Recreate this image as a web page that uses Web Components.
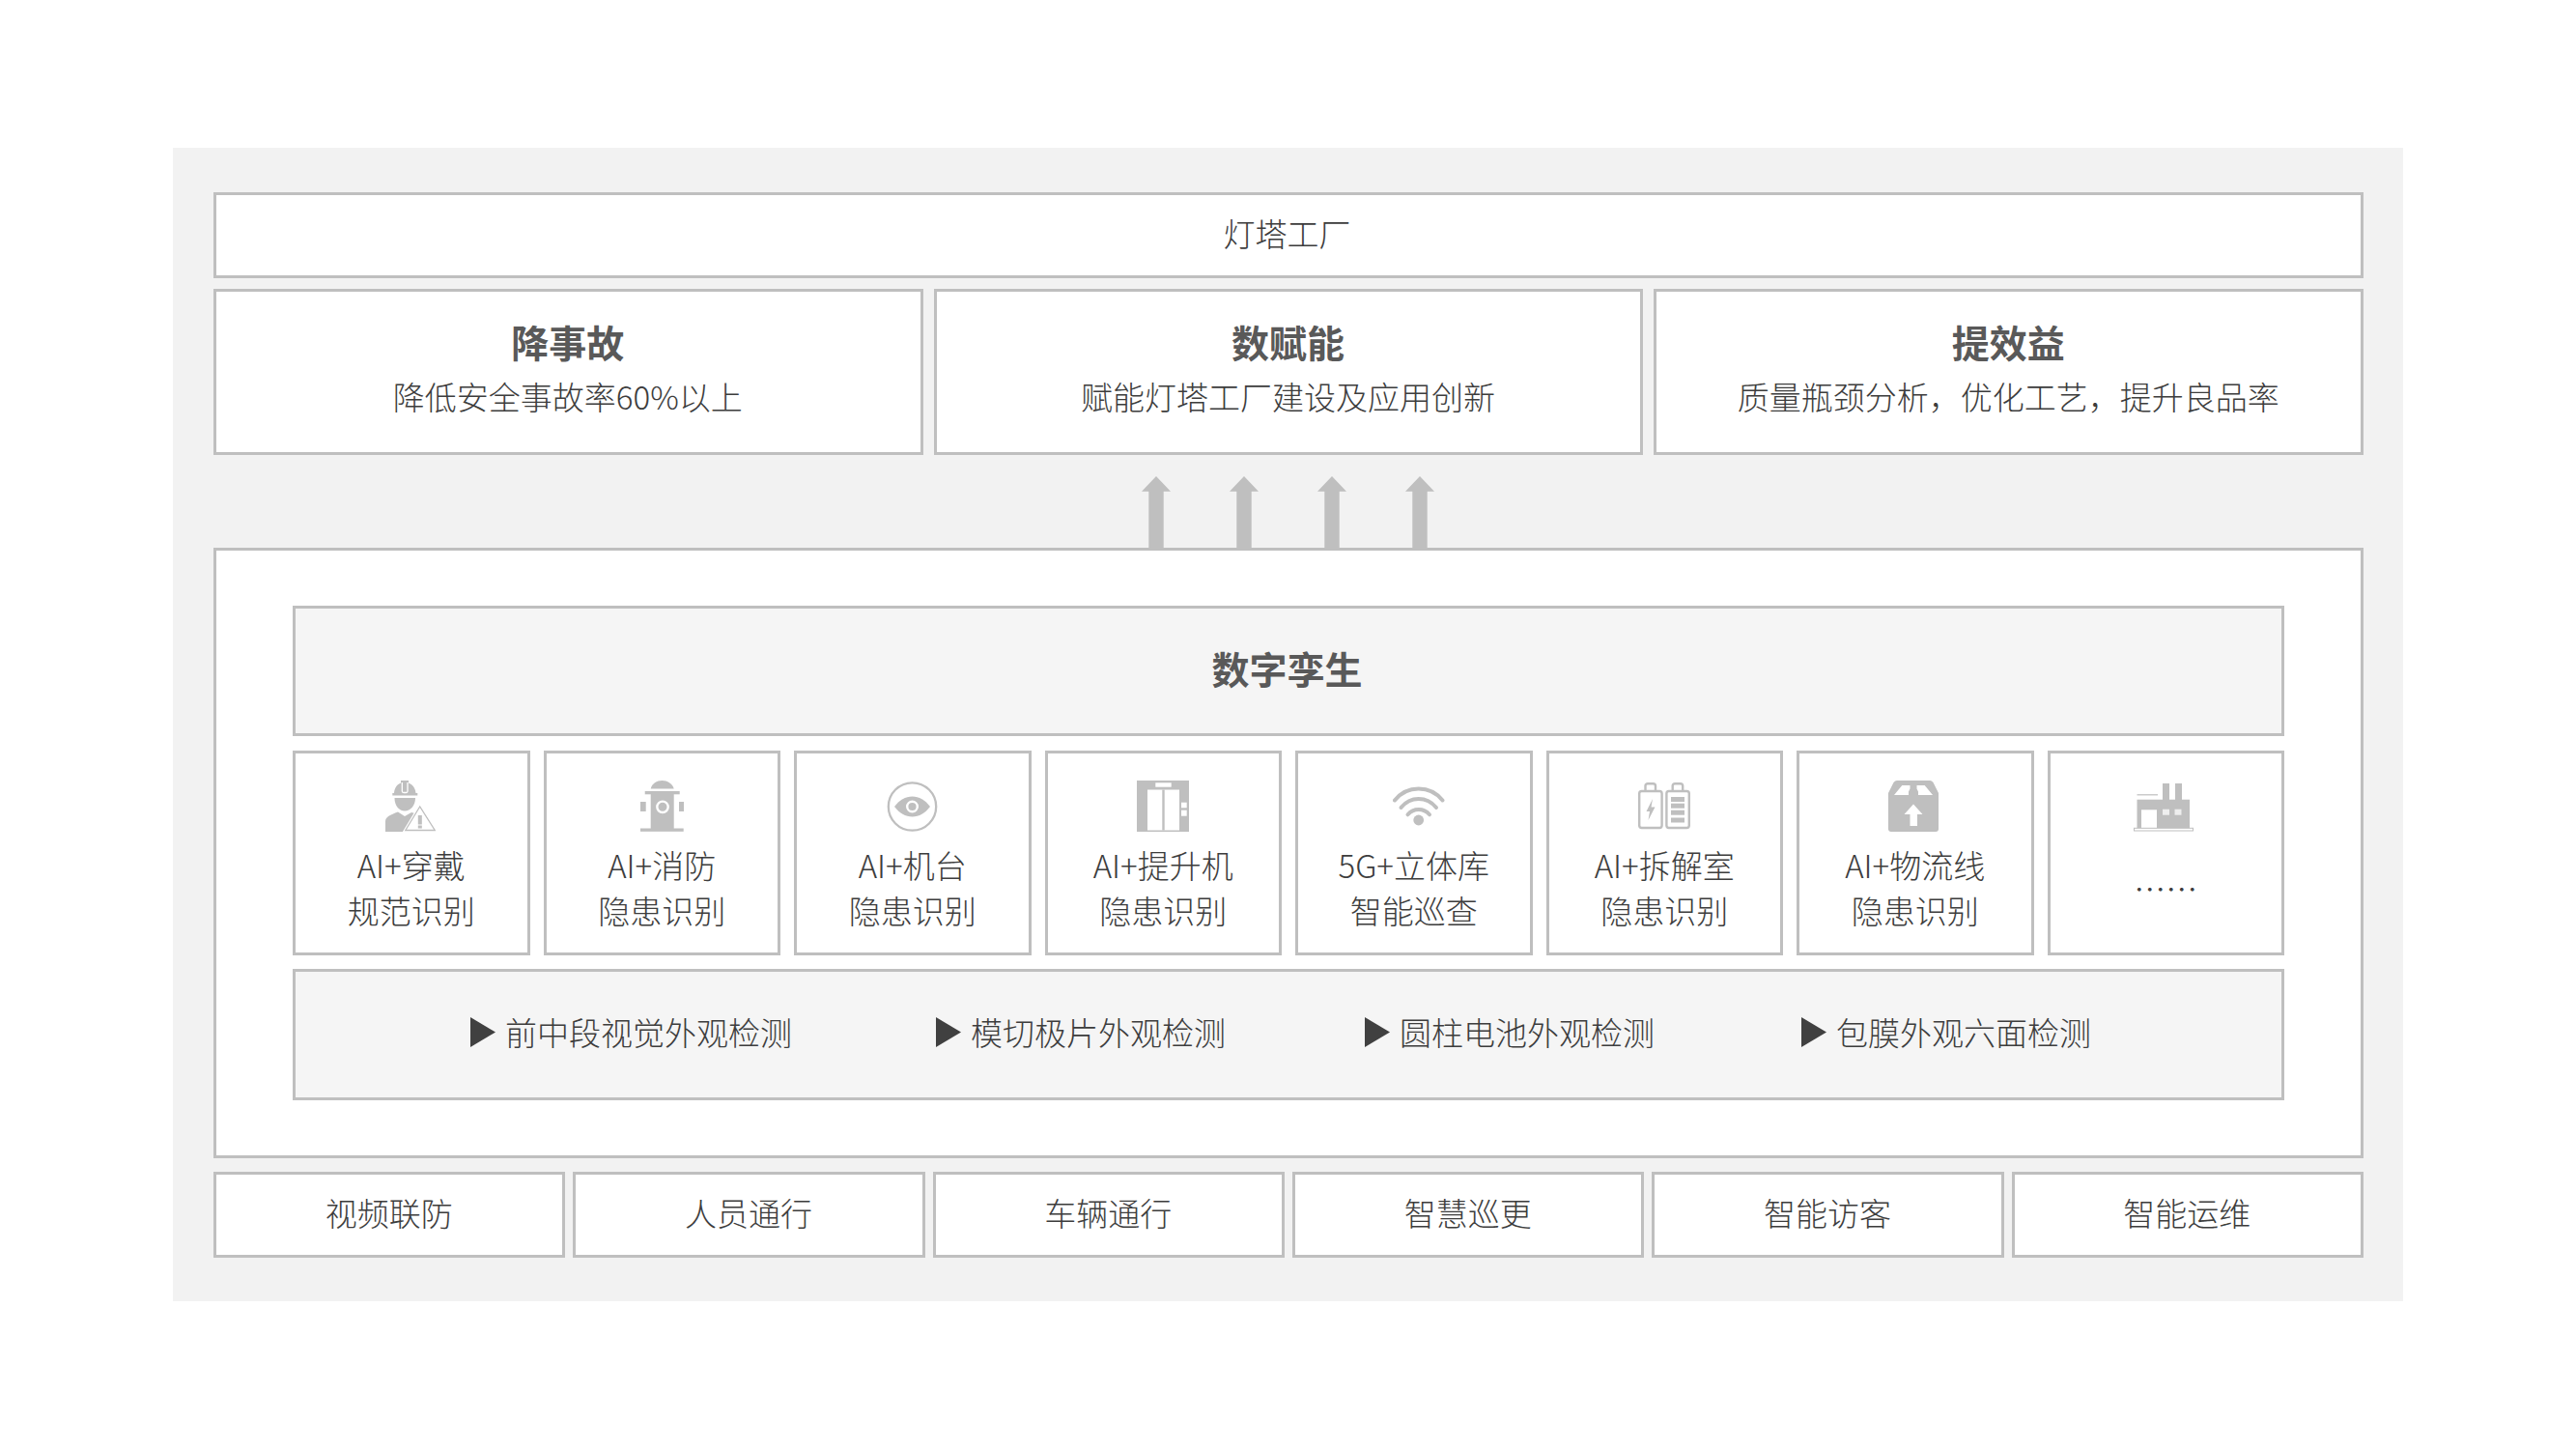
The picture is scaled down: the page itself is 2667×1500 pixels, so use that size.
<!DOCTYPE html>
<html lang="zh-CN">
<head>
<meta charset="utf-8">
<title>灯塔工厂</title>
<style>
html,body{margin:0;padding:0;background:#fff}
body{font-family:"Noto Sans CJK SC","Noto Sans",sans-serif;font-weight:300;color:#3d3d3d;width:2667px;height:1500px;overflow:hidden}
</style>
</head>
<body>
<arch-diagram>
  <plain-box style="height:89px;padding-right:3px">灯塔工厂</plain-box>
  <goal-row>
    <goal-card><span slot="title">降事故</span>降低安全事故率60%以上</goal-card>
    <goal-card><span slot="title">数赋能</span>赋能灯塔工厂建设及应用创新</goal-card>
    <goal-card><span slot="title">提效益</span>质量瓶颈分析，优化工艺，提升良品率</goal-card>
  </goal-row>
  <up-arrows></up-arrows>
  <twin-frame>
    <twin-title>数字孪生</twin-title>
    <scene-row>
      <scene-card icon="worker">AI+穿戴<br>规范识别</scene-card>
      <scene-card icon="hydrant">AI+消防<br>隐患识别</scene-card>
      <scene-card icon="eye">AI+机台<br>隐患识别</scene-card>
      <scene-card icon="elevator">AI+提升机<br>隐患识别</scene-card>
      <scene-card icon="wifi">5G+立体库<br>智能巡查</scene-card>
      <scene-card icon="battery">AI+拆解室<br>隐患识别</scene-card>
      <scene-card icon="box">AI+物流线<br>隐患识别</scene-card>
      <scene-card icon="factory">……</scene-card>
    </scene-row>
    <check-bar>
      <check-item style="margin-left:181px">前中段视觉外观检测</check-item>
      <check-item style="margin-left:149px">模切极片外观检测</check-item>
      <check-item style="margin-left:144px">圆柱电池外观检测</check-item>
      <check-item style="margin-left:152px">包膜外观六面检测</check-item>
    </check-bar>
  </twin-frame>
  <bottom-row>
    <plain-box>视频联防</plain-box>
    <plain-box>人员通行</plain-box>
    <plain-box>车辆通行</plain-box>
    <plain-box>智慧巡更</plain-box>
    <plain-box>智能访客</plain-box>
    <plain-box>智能运维</plain-box>
  </bottom-row>
</arch-diagram>
<script>
const G='#bfbfbf';
const ICONS={
worker:`<svg width="52" height="53" viewBox="0 0 52 53" style="margin-left:-1px">
<path fill="${G}" d="M9 13C9.500 7.500 12 4 16 2.500V0H24V2.500C28 4 31 7.500 31.500 13H33.300V15.500H7.300V13Z"/>
<path fill="none" stroke="#fff" stroke-width="1.300" d="M17.300 2V11Q17.300 12.500 19 12.500H21.500Q23 12.500 23 11V2"/>
<path fill="${G}" d="M9.500 18H31C31 26 26 31.500 20 31.500S9.500 26 9.500 18Z"/>
<path fill="${G}" d="M0 53V42.500C0 37.500 5 35.500 13 32.500L20 37L27 33L34 35L21 53Z"/>
<path fill="#fff" stroke="#fff" stroke-width="3.500" d="M35.700 27L20.500 52H51.500Z"/>
<path fill="#fff" stroke="${G}" stroke-width="1.300" d="M35.700 27L20.800 51.500H51.200Z"/>
<rect x="33.800" y="36" width="4" height="9.500" fill="${G}"/><rect x="33.800" y="46.500" width="4" height="3" fill="${G}"/></svg>`,
hydrant:`<svg width="45" height="53" viewBox="0 0 45 53">
<path fill="${G}" d="M10.700 8.500C12 3 17 0 22.500 0S33 3 34.700 8.500Z"/>
<rect x="4.700" y="11" width="36" height="3.300" fill="${G}"/>
<rect x="10.700" y="14" width="24" height="36" fill="${G}"/>
<rect x="0" y="22" width="5.700" height="10" fill="${G}"/><rect x="40" y="22" width="5" height="10" fill="${G}"/>
<rect x="0" y="49.500" width="44.700" height="3.300" fill="${G}"/>
<circle cx="23" cy="27.300" r="5.700" fill="none" stroke="#fff" stroke-width="2.400"/></svg>`,
eye:`<svg width="54" height="53" viewBox="0 0 54 53" style="margin-left:1px">
<circle cx="26.500" cy="27" r="24.700" fill="none" stroke="${G}" stroke-width="2.300"/>
<path fill="${G}" d="M8 27C13 20.500 19.500 16.500 26.500 16.500S40 20.500 45 27C40 33.500 33.500 37.500 26.500 37.500S13 33.500 8 27Z"/>
<circle cx="26.500" cy="27" r="5.300" fill="none" stroke="#fff" stroke-width="2.400"/></svg>`,
elevator:`<svg width="54" height="53" viewBox="0 0 54 53">
<rect width="54" height="53" fill="${G}"/>
<rect x="11" y="9.500" width="33" height="42" fill="#fff"/>
<rect x="26.300" y="9.500" width="2.400" height="42" fill="${G}"/>
<rect x="19.300" y="2.300" width="16.400" height="4.400" fill="#fff"/>
<rect x="46" y="22.700" width="5.700" height="5.600" fill="#fff"/><rect x="46" y="30.700" width="5.700" height="6" fill="#fff"/></svg>`,
wifi:`<svg width="54" height="53" viewBox="0 0 54 53" style="margin-left:10px">
<g transform="translate(0,6)"><g fill="none" stroke="${G}" stroke-width="4" stroke-linecap="round">
<path d="M2 14.500C8 7 17 2.500 26.700 2.500S45.500 7 51.500 14.500"/>
<path d="M8.500 22C13 16.500 19.500 13 26.700 13S40.500 16.500 45 22"/>
<path d="M15.500 29.300C18.500 25.800 22.500 24 26.700 24S35 25.800 38 29.300"/></g>
<circle cx="26.700" cy="35" r="5.400" fill="${G}"/></g></svg>`,
battery:`<svg width="54" height="53" viewBox="0 0 54 53" style="margin-left:-1px">
<g transform="translate(0,2)"><g fill="none" stroke="${G}" stroke-width="2.400">
<rect x="1.200" y="9" width="23.400" height="38" rx="2.500"/><rect x="29.400" y="9" width="23.400" height="38" rx="2.500"/>
<path d="M7.500 9V3.500Q7.500 1.200 10 1.200H15.500Q18 1.200 18 3.500V9"/><path d="M35.700 9V3.500Q35.700 1.200 38.200 1.200H43.700Q46.200 1.200 46.200 3.500V9"/></g>
<path fill="${G}" d="M15 17L8.500 30H12L10.500 39L17.500 25.500H13.500Z"/>
<g fill="${G}"><rect x="34" y="15" width="14" height="5"/><rect x="34" y="21.700" width="14" height="5"/><rect x="34" y="28.700" width="14" height="5"/><rect x="34" y="36.500" width="14" height="5"/></g></g></svg>`,
box:`<svg width="52" height="53" viewBox="0 0 52 53" style="margin-left:-4px">
<path fill="${G}" d="M9 0H43Q45 0 46.500 2L52 13V50Q52 53 49 53H3Q0 53 0 50V13L5.500 2Q7 0 9 0Z"/>
<path fill="#fff" d="M6 15L14.300 5H22.500V8.500L21 11.500V15ZM46 15L37.700 5H29.500V8.500L31 11.500V15ZM26 24.500L16.500 35H22.500V47H30V35H35.500Z"/></svg>`,
factory:`<svg width="62" height="53" viewBox="0 0 62 53" style="margin-left:-4px">
<g transform="translate(0,3)"><g fill="${G}"><rect x="30" y="0" width="7" height="18"/><rect x="43" y="0" width="7" height="18"/>
<rect x="3.500" y="16.700" width="54.500" height="30"/><rect x="3.500" y="11.200" width="21.500" height="1.200"/></g>
<rect x="8" y="27.300" width="16" height="19" fill="#fff"/>
<rect x="30" y="26.700" width="7" height="6" fill="#eee"/><rect x="42.500" y="26.700" width="7" height="6" fill="#eee"/>
<rect x=".5" y="46.300" width="61" height="2.700" fill="#fff" stroke="${G}"/></g></svg>`
};
function el(tag,css,html,init){
  const t=document.createElement('template');
  t.innerHTML=`<style>${css}</style>${html}`;
  customElements.define(tag,class extends HTMLElement{
    constructor(){super();this.attachShadow({mode:'open'}).appendChild(t.content.cloneNode(true));}
    connectedCallback(){if(init)init(this);}
  });
}
const BOX='border:3px solid #bfbfbf;box-sizing:border-box;';
el('arch-diagram',`:host{display:flex;flex-direction:column;box-sizing:border-box;margin:153px 0 0 179px;width:2309px;height:1194px;padding:46px 41px 45px 42px;background:#f2f2f2;font-size:33px;line-height:47px}`,`<slot></slot>`);
el('plain-box',`:host{display:flex;align-items:center;justify-content:center;background:#fff;${BOX}padding:0 1px 4px 0}`,`<slot></slot>`);
el('goal-row',`:host{display:grid;grid-template-columns:repeat(3,1fr);column-gap:11px;margin-top:11px;height:172px}`,`<slot></slot>`);
el('goal-card',`:host{display:flex;flex-direction:column;align-items:center;background:#fff;${BOX}padding:26px 1px 0 0}
.t{font-size:39px;font-weight:700;line-height:50px;color:#595959}.s{line-height:50px;margin-top:7px}`,`<div class="t"><slot name="title"></slot></div><div class="s"><slot></slot></div>`);
el('up-arrows',`:host{display:flex;justify-content:center;align-items:flex-end;gap:60.700px;height:96px;padding-right:1px;box-sizing:border-box}svg{display:block}`,
 Array(4).fill(`<svg width="30" height="74" viewBox="0 0 30 74"><path fill="#bfbfbf" d="M15 0L30 15.700H22.700V74H7.300V15.700H0Z"/></svg>`).join(''));
el('twin-frame',`:host{display:flex;flex-direction:column;height:632px;box-sizing:border-box;background:#fff;${BOX}padding:57px 79px}`,`<slot></slot>`);
el('twin-title',`:host{display:flex;align-items:center;justify-content:center;height:135px;box-sizing:border-box;background:#f5f5f5;${BOX}font-size:39px;font-weight:700;color:#595959;padding:0 3px 7px 0}`,`<slot></slot>`);
el('scene-row',`:host{display:grid;grid-template-columns:repeat(8,1fr);column-gap:14px;margin:15px 0 14px;height:212px}`,`<slot></slot>`);
el('scene-card',`:host{display:flex;flex-direction:column;align-items:center;box-sizing:border-box;${BOX}padding-top:28px;text-align:center}
.i{height:53px;display:flex;justify-content:center}.i svg{display:block}
.l{height:94px;margin-top:11px;display:flex;align-items:center;justify-content:center}`,
 `<div class="i"></div><div class="l"><div><slot></slot></div></div>`,
 h=>{h.shadowRoot.querySelector('.i').innerHTML=ICONS[h.getAttribute('icon')]||'';});
el('check-bar',`:host{display:flex;align-items:center;height:136px;box-sizing:border-box;background:#f5f5f5;${BOX}padding-bottom:5px}`,`<slot></slot>`);
el('check-item',`:host{display:flex;align-items:center;gap:10px;flex:none}svg{display:block;flex:none}`,`<svg width="26" height="31" viewBox="0 0 26 31"><path fill="#404040" d="M0 0L26 15.500L0 31Z"/></svg><span><slot></slot></span>`);
el('bottom-row',`:host{display:grid;grid-template-columns:repeat(6,1fr);column-gap:8px;margin-top:14px;height:89px}`,`<slot></slot>`);
</script>
</body>
</html>
